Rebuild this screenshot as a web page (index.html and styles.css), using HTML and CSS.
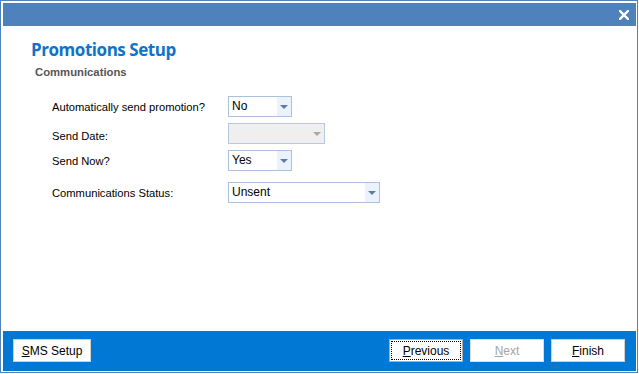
FILE: index.html
```html
<!DOCTYPE html>
<html lang="en">
<head>
    <meta charset="UTF-8">
    <title>Promotions Setup</title>
    <link rel="stylesheet" href="styles.css">
</head>
<body>
    <div class="window">
        <div class="titlebar">
            <svg class="close" width="10" height="10" viewBox="0 0 10 10">
                <path d="M1 1 L9 9 M9 1 L1 9" stroke="white" stroke-width="2.4" stroke-linecap="square"/>
            </svg>
        </div>

        <div class="content">
            <h1 class="page-title">Promotions Setup</h1>
            <h2 class="section-title">Communications</h2>

            <div class="form">
                <div class="row">
                    <label class="label">Automatically send promotion?</label>
                    <div class="combo small">
                        <span class="value">No</span>
                        <span class="drop"><span class="arrow"></span></span>
                    </div>
                </div>
                <div class="row">
                    <label class="label label-low">Send Date:</label>
                    <div class="combo medium disabled">
                        <span class="value"></span>
                        <span class="drop"><span class="arrow"></span></span>
                    </div>
                </div>
                <div class="row">
                    <label class="label">Send Now?</label>
                    <div class="combo small">
                        <span class="value">Yes</span>
                        <span class="drop"><span class="arrow"></span></span>
                    </div>
                </div>
                <div class="row row-gap">
                    <label class="label">Communications Status:</label>
                    <div class="combo large">
                        <span class="value">Unsent</span>
                        <span class="drop"><span class="arrow"></span></span>
                    </div>
                </div>
            </div>
        </div>

        <div class="footer">
            <button class="btn btn-wide"><u>S</u>MS Setup</button>
            <div class="nav">
                <button class="btn focused"><u>P</u>revious</button>
                <button class="btn" disabled><u>N</u>ext</button>
                <button class="btn"><u>F</u>inish</button>
            </div>
        </div>
    </div>
</body>
</html>
```

FILE: styles.css
```css
* {
    box-sizing: border-box;
}
body {
    margin: 0;
    background: white;
    font-family: "Liberation Sans", Arial, sans-serif;
    font-size: 12px;
    color: #000;
}
.window {
    width: 638px;
    height: 373px;
    border: 1px solid #4f81bd;
    padding: 2px 1px 1px 2px;
    display: flex;
    flex-direction: column;
    background: white;
}
.titlebar {
    height: 23px;
    background: #4f81bd;
    display: flex;
    justify-content: flex-end;
    align-items: center;
    padding-right: 7px;
}
.close {
    display: block;
}
.content {
    flex: 1;
    padding: 13px 0 0 28px;
}
.page-title {
    margin: 0;
    font-family: "Open Sans", sans-serif;
    font-size: 17px;
    font-weight: bold;
    line-height: 22px;
    color: #0f73c9;
    letter-spacing: -0.45px;
}
.section-title {
    margin: 4px 0 0 4px;
    font-family: "Liberation Sans", sans-serif;
    font-size: 11.3px;
    font-weight: bold;
    line-height: 14px;
    color: #555;
}
.form {
    margin-top: 17px;
    padding-left: 21px;
}
.row {
    display: flex;
    align-items: center;
    height: 21px;
    margin-bottom: 6px;
}
.row-gap {
    margin-top: 11px;
}
.label {
    width: 176px;
    font-size: 11.2px;
}
.label-low {
    padding-top: 5px;
}
.combo {
    height: 21px;
    border: 1px solid #abc1de;
    background: white;
    display: flex;
    align-items: stretch;
}
.combo.small {
    width: 64px;
}
.combo.medium {
    width: 97px;
}
.combo.large {
    width: 152px;
}
.combo .value {
    flex: 1;
    padding-left: 3px;
    line-height: 19px;
    font-size: 12px;
}
.combo .drop {
    width: 14px;
    background: #eaf2fc;
    display: flex;
    align-items: center;
    justify-content: center;
}
.arrow {
    width: 0;
    height: 0;
    border-left: 4px solid transparent;
    border-right: 4px solid transparent;
    border-top: 4px solid #5d7aa8;
}
.combo.disabled {
    background: #efefef;
    border-color: #b8c8de;
}
.combo.disabled .drop {
    background: #efefef;
}
.combo.disabled .arrow {
    border-top-color: #a8a8a8;
}
.footer {
    height: 40px;
    background: #0078d4;
    display: flex;
    justify-content: space-between;
    align-items: flex-start;
    padding: 8px 11px 0 10px;
}
.nav {
    display: flex;
    gap: 7px;
}
.btn {
    height: 23px;
    width: 74px;
    background: white;
    border: 1px solid #d0d0d0;
    font-family: "Liberation Sans", Arial, sans-serif;
    font-size: 12px;
    color: #000;
    padding: 0;
    cursor: pointer;
}
.btn-wide {
    width: 78px;
}
.btn:disabled {
    color: #a6a6a6;
    border-color: #dcdcdc;
}
.focused {
    border-color: #adadad;
    outline: 1px dotted #000;
    outline-offset: -3px;
}
```
